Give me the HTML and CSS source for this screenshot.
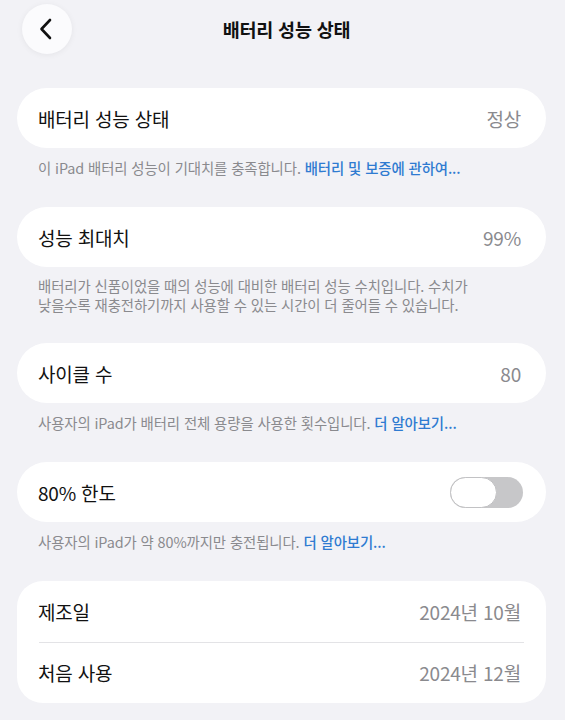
FILE: index.html
```html
<!DOCTYPE html>
<html lang="ko">
<head>
<meta charset="utf-8">
<link rel="stylesheet" href="styles.css">
</head>
<body>
<div class="page">
  <header class="nav">
    <button class="back" aria-label="뒤로">
      <svg width="16" height="22" viewBox="0 0 16 22"><path d="M12 2 L3.5 11 L12 20" fill="none" stroke="#111" stroke-width="2.6" stroke-linecap="round" stroke-linejoin="round"/></svg>
    </button>
    <h1 class="title">배터리 성능 상태</h1>
  </header>

  <main class="content">
    <section class="card pill">
      <div class="row"><span class="label">배터리 성능 상태</span><span class="value">정상</span></div>
    </section>
    <p class="note">이 iPad 배터리 성능이 기대치를 충족합니다. <span class="link">배터리 및 보증에 관하여...</span></p>

    <section class="card pill">
      <div class="row"><span class="label">성능 최대치</span><span class="value">99%</span></div>
    </section>
    <p class="note two"><span class="line">배터리가 신품이었을 때의 성능에 대비한 배터리 성능 수치입니다. 수치가</span><span class="line">낮을수록 재충전하기까지 사용할 수 있는 시간이 더 줄어들 수 있습니다.</span></p>

    <section class="card pill">
      <div class="row"><span class="label">사이클 수</span><span class="value">80</span></div>
    </section>
    <p class="note">사용자의 iPad가 배터리 전체 용량을 사용한 횟수입니다. <span class="link">더 알아보기...</span></p>

    <section class="card pill">
      <div class="row"><span class="label">80% 한도</span><span class="toggle"><span class="knob"></span></span></div>
    </section>
    <p class="note">사용자의 iPad가 약 80%까지만 충전됩니다. <span class="link">더 알아보기...</span></p>

    <section class="card group">
      <div class="row"><span class="label">제조일</span><span class="value">2024년 10월</span></div>
      <div class="row sep"><span class="label">처음 사용</span><span class="value">2024년 12월</span></div>
    </section>
  </main>
</div>
</body>
</html>
```

FILE: styles.css
```css
html, body {
  margin: 0;
  padding: 0;
}
body {
  background: #f2f2f6;
  font-family: "Noto Sans CJK KR", "Noto Sans", sans-serif;
  color: #111;
  width: 565px;
  height: 720px;
  overflow: hidden;
}
.page {
  padding: 0 19px 0 17px;
}
.nav {
  position: relative;
  height: 58px;
  display: flex;
  align-items: center;
  justify-content: center;
}
.back {
  position: absolute;
  left: 5px;
  top: 4px;
  width: 50px;
  height: 50px;
  border-radius: 50%;
  border: none;
  background: #fbfbfd;
  box-shadow: 0 1px 6px rgba(0,0,0,0.06);
  display: flex;
  align-items: center;
  justify-content: center;
  padding: 0 3px 0 0;
}
.title {
  margin: 0 0 0 10px;
  font-size: 18.5px;
  font-weight: 700;
  letter-spacing: -0.2px;
}
.content {
  padding-top: 30px;
}
.card {
  background: #fff;
}
.pill {
  border-radius: 30px;
}
.group {
  border-radius: 26px;
}
.row {
  height: 60px;
  display: flex;
  align-items: center;
  justify-content: space-between;
  padding: 0 25px 0 21px;
  font-size: 19px;
  letter-spacing: -0.2px;
}
.group .row {
  height: 61px;
}
.group .row.sep {
  position: relative;
}
.group .row.sep::before {
  content: "";
  position: absolute;
  left: 22px;
  right: 22px;
  top: 0;
  height: 1px;
  background: #e3e3e6;
}
.value {
  color: #8a8a8e;
  font-size: 19px;
}
.note {
  margin: 0;
  padding: 10px 21px 30px;
  font-size: 14.4px;
  line-height: 19px;
  color: #8a8a8e;
  letter-spacing: -0.1px;
}
.note.two {
  padding-top: 9px;
  padding-bottom: 29px;
  display: flex;
  flex-direction: column;
}
.note.two .line {
  display: block;
}
.link {
  color: #2f7bd1;
  font-weight: 500;
}
.toggle {
  width: 73px;
  height: 31px;
  border-radius: 16px;
  background: #c7c7c9;
  margin-right: -2px;
  display: flex;
}
.knob {
  width: 47px;
  height: 31px;
  box-sizing: border-box;
  border-radius: 16px;
  background: #fff;
  border: 1.5px solid #c2c2c4;
}
```
